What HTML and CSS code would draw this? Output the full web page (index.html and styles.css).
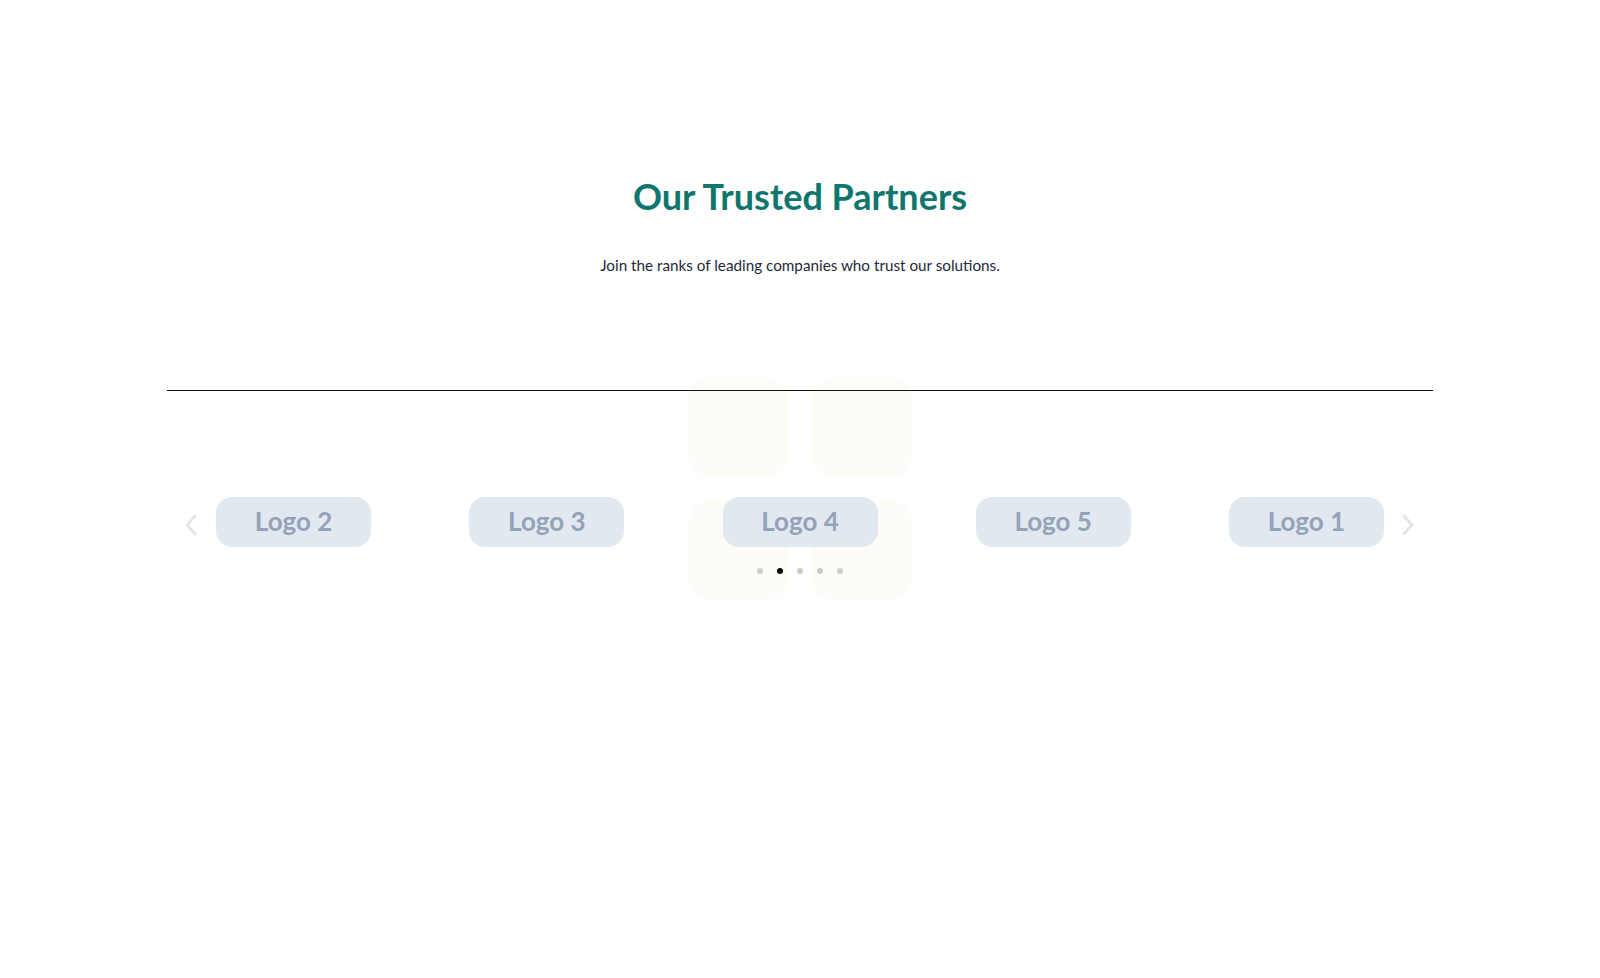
FILE: index.html
```html
<!DOCTYPE html>
<html>
  <head>
    <title>Our Trusted Partners</title>
    <meta name="viewport" content="width=device-width, initial-scale=1">
    <link rel="stylesheet" href="styles.css">
  </head>
  <body>
  <div class="partners">
    <h2 class="title">Our Trusted Partners</h2>
    <p class="lead">Join the ranks of leading companies who trust our solutions.</p>

    <div class="carousel">
      <!-- soft tiles sitting behind the slider -->
      <div class="tiles">
        <span></span><span></span><span></span><span></span>
      </div>

      <button class="arrow prev" aria-label="Previous">
        <svg width="12" height="22" viewBox="0 0 12 22"><path d="M10 2 L2 11 L10 20" fill="none" stroke="currentColor" stroke-width="3" stroke-linecap="round" stroke-linejoin="round"/></svg>
      </button>

      <div class="track">
        <div class="slide"><div class="logo">Logo 2</div></div>
        <div class="slide"><div class="logo">Logo 3</div></div>
        <div class="slide"><div class="logo">Logo 4</div></div>
        <div class="slide"><div class="logo">Logo 5</div></div>
        <div class="slide"><div class="logo">Logo 1</div></div>
      </div>

      <button class="arrow next" aria-label="Next">
        <svg width="12" height="22" viewBox="0 0 12 22"><path d="M2 2 L10 11 L2 20" fill="none" stroke="currentColor" stroke-width="3" stroke-linecap="round" stroke-linejoin="round"/></svg>
      </button>

      <div class="dots">
        <span class="dot"></span>
        <span class="dot active"></span>
        <span class="dot"></span>
        <span class="dot"></span>
        <span class="dot"></span>
      </div>
    </div>
  </div>
  </body>
</html>
```

FILE: styles.css
```css
* {
  box-sizing: border-box;
  padding: 0px;
  margin: 0px;
}
html {
  background-color: white;
}
body {
  font-family: "Lato", "Open Sans", sans-serif;
}
.partners {
  padding-top: 174px;
  text-align: center;
}
.title {
  font-size: 36px;
  line-height: 44px;
  font-weight: 700;
  color: #0f766e;
}
.lead {
  margin-top: 37px;
  font-size: 15.25px;
  line-height: 20px;
  color: #1e293b;
}
.carousel {
  position: relative;
  width: 1266px;
  margin: 115px auto 0;
  padding-bottom: 40px;
}
/* top rule drawn over the tiles */
.carousel::before {
  content: "";
  position: absolute;
  top: 0;
  left: 0;
  right: 0;
  height: 1px;
  background-color: #111;
  z-index: 2;
}
.tiles {
  position: absolute;
  top: -13px;
  left: 50%;
  transform: translateX(-50%);
  display: grid;
  grid-template-columns: 100px 100px;
  gap: 23px 24px;
}
.tiles span {
  width: 100px;
  height: 100px;
  border-radius: 24px;
  background-color: #fdfcf6;
}
.track {
  position: relative;
  display: flex;
  padding-top: 107px;
}
.slide {
  flex: 1;
  display: flex;
  justify-content: center;
}
.logo {
  width: 155px;
  height: 50px;
  padding-bottom: 3px;
  display: flex;
  align-items: center;
  justify-content: center;
  border-radius: 16px;
  background-color: #e2e8f0;
  color: #94a3b8;
  font-size: 26px;
  font-weight: 700;
}
.arrow {
  position: absolute;
  top: 124px;
  border: none;
  background: none;
  color: #e5e5e5;
  display: flex;
}
.prev {
  left: 18px;
}
.next {
  right: 19px;
}
.dots {
  position: relative;
  display: flex;
  justify-content: center;
  gap: 14px;
  margin-top: 21px;
}
.dot {
  width: 6px;
  height: 6px;
  border-radius: 50%;
  background-color: #cbcbcb;
}
.dot.active {
  background-color: black;
}
```
